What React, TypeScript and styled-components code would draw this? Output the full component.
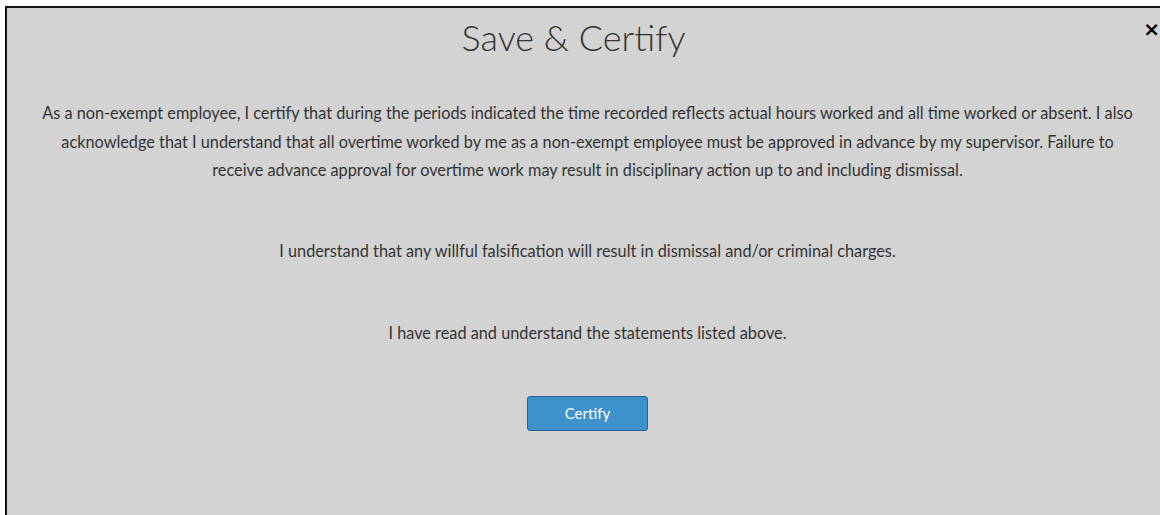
import React from "react";
import styled, { createGlobalStyle } from "styled-components";

const Global = createGlobalStyle`
  html, body {
    margin: 0;
    padding: 0;
    background: #ffffff;
    overflow: hidden;
  }
  #root {
    width: 1160px;
    height: 515px;
  }
`;

const Page = styled.div`
  box-sizing: border-box;
  width: 1160px;
  height: 515px;
  padding: 6px 0 0 5px;
  background: #ffffff;
  display: flex;
`;

const Dialog = styled.section`
  position: relative;
  flex: 1;
  box-sizing: border-box;
  background: #d3d3d3;
  border-top: 2px solid #151515;
  border-left: 2px solid #151515;
  display: flex;
  flex-direction: column;
  align-items: center;
  font-family: Lato, "Open Sans", sans-serif;
  color: #333333;
`;

const Title = styled.h1`
  margin: 7px 0 0;
  padding-right: 20px;
  font-weight: 300;
  font-size: 36px;
  line-height: 44px;
  color: #333333;
`;

const CloseButton = styled.button`
  position: absolute;
  top: 10px;
  right: 0;
  border: none;
  background: transparent;
  padding: 0;
  font-family: "DejaVu Sans", sans-serif;
  font-weight: 700;
  font-size: 20px;
  line-height: 22px;
  color: #000;
  cursor: pointer;
`;

const Body = styled.div`
  width: 1100px;
  padding-left: 8px;
  display: flex;
  flex-direction: column;
  align-items: center;
  text-align: center;
`;

const Paragraph = styled.p<{ $top: number }>`
  margin: ${(p) => p.$top}px 0 0;
  font-size: 16.3px;
  line-height: 28.5px;
`;

const PrimaryButton = styled.button`
  margin-top: 48px;
  width: 121px;
  height: 35px;
  box-sizing: border-box;
  background: #3d92cb;
  border: 1px solid #2c5f93;
  border-radius: 3px;
  color: #ffffff;
  font-family: Lato, "Open Sans", sans-serif;
  font-size: 15px;
  cursor: pointer;
`;

export default function App() {
  return (
    <>
      <Global />
      <Page>
        <Dialog>
          <CloseButton aria-label="Close">×</CloseButton>
          <Title>Save &amp; Certify</Title>
          <Body>
            <Paragraph $top={40}>
              As a non-exempt employee, I certify that during the periods indicated the time recorded reflects actual
              hours worked and all time worked or absent. I also acknowledge that I understand that all overtime worked
              by me as a non-exempt employee must be approved in advance by my supervisor. Failure to receive advance
              approval for overtime work may result in disciplinary action up to and including dismissal.
            </Paragraph>
            <Paragraph $top={52}>
              I understand that any willful falsification will result in dismissal and/or criminal charges.
            </Paragraph>
            <Paragraph $top={54}>I have read and understand the statements listed above.</Paragraph>
            <PrimaryButton>Certify</PrimaryButton>
          </Body>
        </Dialog>
      </Page>
    </>
  );
}
